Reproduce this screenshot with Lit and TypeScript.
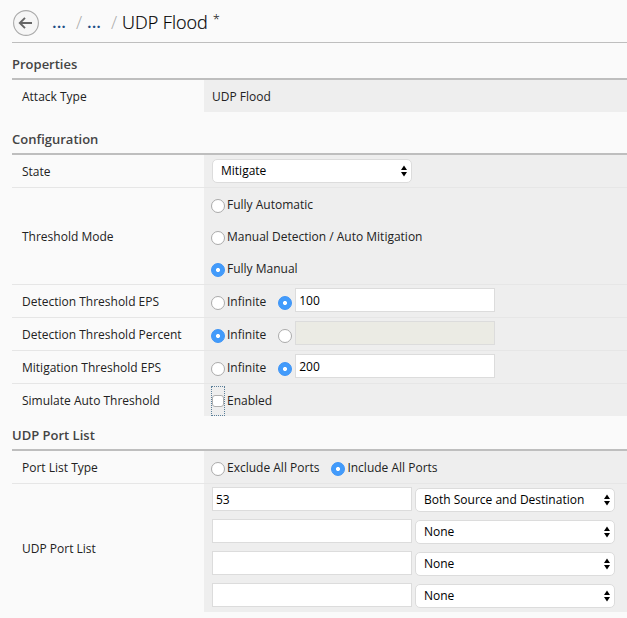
import { LitElement, html, css, svg, nothing } from "lit";
import { customElement, property } from "lit/decorators.js";

const FONT = css`"Open Sans", "Noto Sans", sans-serif`;

@customElement("select-box")
class SelectBox extends LitElement {
  @property() value = "";

  static styles = css`
    :host { display: block; flex: none; width: 200px; height: 24px; }
    .box {
      box-sizing: border-box; height: 24px; padding: 0 4px 0 8px;
      display: flex; align-items: center; justify-content: space-between;
      background: #fff; border: 1px solid #dcdcdc; border-radius: 5px;
      font: 12px/22px ${FONT}; color: #000;
    }
    .arrows { display: block; width: 6px; height: 12px; }
  `;

  render() {
    return html`<div class="box" role="combobox">
      <span>${this.value}</span>
      <svg class="arrows" viewBox="0 0 6 12">
        ${svg`<path d="M3 0.5 6 5H0zM0 7h6L3 11.5z" fill="#000"/>`}
      </svg>
    </div>`;
  }
}

@customElement("app-root")
class AppRoot extends LitElement {
  static styles = css`
    :host {
      display: block; box-sizing: border-box; height: 618px; overflow: hidden;
      padding-left: 12px; background: #fafafa; color: #222;
      font: 12px/32px ${FONT};
    }
    .header {
      box-sizing: border-box; height: 43px; display: flex; align-items: center;
      padding: 2px 0 0 1px; border-bottom: 1px solid #bebebe;
      font-size: 18px; font-weight: 300; line-height: 26px; color: #000;
    }
    .back { flex: none; display: block; width: 26px; height: 26px; margin-top: 2px; }
    .crumb { width: 15px; margin-left: 13px; color: #1d4f85; font-weight: 600; font-size: 17px; }
    .slash { width: 7px; margin-left: 9px; color: #aaa; }
    .crumb.second { margin-left: 4px; }
    .title { margin-left: 4px; white-space: nowrap; -webkit-text-stroke: 0.2px #000; }
    .dirty { margin: -6px 0 0 5px; font-size: 13px; line-height: 18px; }
    .heading {
      box-sizing: border-box; margin: 0; border-bottom: 2px solid #bebebe;
      font-size: 13px; font-weight: 600; line-height: 18px; color: #444;
    }
    .properties { height: 37px; padding-top: 12px; }
    .configuration { height: 43px; padding-top: 18px; }
    .ports { height: 35px; padding-top: 10px; }
    .row { display: grid; grid-template-columns: 192px 1fr; }
    .row + .row { border-top: 1px solid #e6e6e6; }
    .label { display: flex; align-items: center; padding: 2px 0 0 10px; line-height: 30px; }
    .value { background: #eee; padding-left: 8px; min-height: 32px; }
    .text { display: block; height: 32px; line-height: 34px; }
    .line { display: flex; height: 32px; align-items: center; }
    .option { display: flex; align-items: center; height: 32px; margin-left: -1px; white-space: nowrap; }
    .caption { height: 32px; line-height: 34px; }
    .radio {
      box-sizing: border-box; flex: none; width: 14px; height: 14px; margin: 4px 2px 0 0;
      border: 1px solid #aaa; border-radius: 50%; background: #fff;
    }
    .radio.on {
      border-color: #3b93f7;
      background: radial-gradient(circle, #fff 0 1.6px, #429bfb 2.4px);
    }
    .gap { margin-left: 12px; }
    .field {
      box-sizing: border-box; flex: none; width: 200px; height: 24px; margin: 0;
      padding: 0 3px; border: 1px solid #dcdcdc; border-radius: 0; outline: 0;
      background: #fff; font: 12px/22px ${FONT}; color: #000;
    }
    .threshold { margin: -2px 0 0 1px; }
    .field:disabled { background: #ebebe4; }
    .focus {
      box-sizing: border-box; width: 14px; height: 30px; margin: 2px 2px 0 0;
      border: 1px dotted #5b7f99; display: flex; align-items: center; justify-content: center;
    }
    .check {
      box-sizing: border-box; flex: none; width: 12px; height: 12px;
      border: 1px solid #b0b0b0; border-radius: 3px; background: #fff;
    }
    .port { display: flex; height: 32px; align-items: flex-start; gap: 3px; padding-top: 3px; box-sizing: border-box; }
    .port select-box { margin-top: 1px; }
  `;

  private option(on: boolean, text = "", cls = "") {
    return html`<label class="option ${cls}">
      <span class="radio ${on ? "on" : ""}"></span>${text ? html`<span class="caption">${text}</span>` : nothing}
    </label>`;
  }

  private row(label: string, value: unknown) {
    return html`<div class="row">
      <div class="label">${label}</div>
      <div class="value">${value}</div>
    </div>`;
  }

  private threshold(label: string, amount: string) {
    const infinite = amount === "";
    return this.row(label, html`<div class="line">
      ${this.option(infinite, "Infinite")}
      ${this.option(!infinite, "", "gap")}
      <input class="field threshold" .value=${amount} ?disabled=${infinite} />
    </div>`);
  }

  render() {
    const ports = [
      ["53", "Both Source and Destination"],
      ["", "None"],
      ["", "None"],
      ["", "None"],
    ];
    return html`
      <div class="header">
        <svg class="back" viewBox="0 0 26 26" fill="none">
          <circle cx="13" cy="13" r="12.4" fill="#f6f6f6" stroke="#aaa" stroke-width="1.1" />
          <path d="M19 13H7.5M12 7.8 6.8 13 12 18.2" stroke="#666" stroke-width="1.9" />
        </svg>
        <span class="crumb">...</span><span class="slash">/</span>
        <span class="crumb second">...</span><span class="slash">/</span>
        <span class="title">UDP Flood</span><span class="dirty">*</span>
      </div>
      <h2 class="heading properties">Properties</h2>
      ${this.row("Attack Type", html`<span class="text">UDP Flood</span>`)}
      <h2 class="heading configuration">Configuration</h2>
      <div>
        ${this.row("State", html`<div class="line"><select-box value="Mitigate"></select-box></div>`)}
        ${this.row("Threshold Mode", [
          this.option(false, "Fully Automatic"),
          this.option(false, "Manual Detection / Auto Mitigation"),
          this.option(true, "Fully Manual"),
        ])}
        ${this.threshold("Detection Threshold EPS", "100")}
        ${this.threshold("Detection Threshold Percent", "")}
        ${this.threshold("Mitigation Threshold EPS", "200")}
        ${this.row("Simulate Auto Threshold", html`<label class="option">
          <span class="focus"><span class="check"></span></span><span class="caption">Enabled</span>
        </label>`)}
      </div>
      <h2 class="heading ports">UDP Port List</h2>
      <div>
        ${this.row("Port List Type", html`<div class="line">
          ${this.option(false, "Exclude All Ports")}
          ${this.option(true, "Include All Ports", "gap")}
        </div>`)}
        ${this.row("UDP Port List", ports.map(([port, mode]) => html`<div class="port">
          <input class="field" .value=${port} />
          <select-box value=${mode}></select-box>
        </div>`))}
      </div>
    `;
  }
}
